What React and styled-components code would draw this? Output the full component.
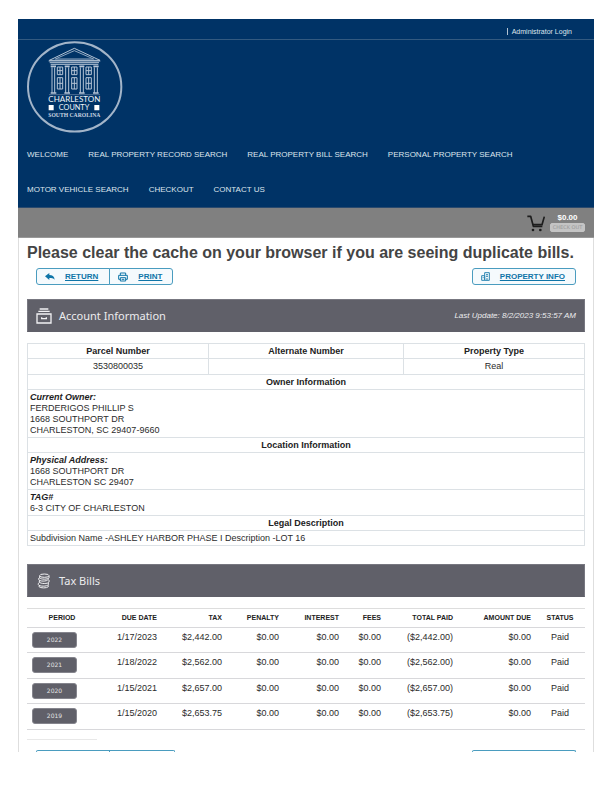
import React from "react";
import styled, { createGlobalStyle } from "styled-components";

const GlobalStyle = createGlobalStyle`
  * { box-sizing: border-box; }
  body {
    margin: 0;
    background: #fff;
    color: #2b2b2b;
    font: 9px/11px "Liberation Sans", Arial, sans-serif;
  }
`;

const Page = styled.div`
  padding: 19px 18px 40px;
`;

const Header = styled.header`
  background: #003366;
  color: #dde5ed;
  border-bottom: 1px solid #2a4a6e;
`;

const TopBar = styled.div`
  display: flex;
  justify-content: flex-end;
  align-items: center;
  gap: 4px;
  height: 21px;
  padding: 4px 22px 0 0;
  border-bottom: 1px solid #335a80;
  font-size: 7px;
`;

const Divider = styled.span`
  width: 1px;
  height: 7px;
  background: #b3c2d1;
`;

const PlainLink = styled.a`
  color: inherit;
  text-decoration: none;
`;

const LogoLink = styled.a`
  display: block;
  width: 96px;
  margin: 1px 0 0 9px;
  svg { display: block; }
`;

const Nav = styled.nav`
  display: flex;
  flex-wrap: wrap;
  column-gap: 20px;
  padding: 4px 60px 0 9px;
`;

const NavLink = styled(PlainLink)`
  font-size: 8px;
  line-height: 35px;
`;

const CartBar = styled.div`
  display: flex;
  justify-content: flex-end;
  align-items: center;
  gap: 5px;
  height: 30px;
  padding-right: 9px;
  background: #808080;
  border-bottom: 1px solid #999;
  svg { display: block; }
`;

const CartInfo = styled.div`
  display: flex;
  flex-direction: column;
  align-items: center;
  color: #fff;
  font-size: 8px;
  line-height: 9px;
`;

const CheckoutButton = styled.button`
  width: 35px;
  height: 9px;
  margin-top: 1px;
  padding: 0;
  border: 1px solid #c4c4c4;
  border-radius: 2px;
  background: #c4c4c4;
  color: #999;
  font: 5px/7px "DejaVu Sans", sans-serif;
`;

const Content = styled.main`
  padding: 0 8px;
  border: solid #dedede;
  border-width: 0 1px;
`;

const Notice = styled.h1`
  margin: 0;
  padding-top: 5px;
  color: #444;
  font-size: 16px;
  line-height: 20px;
  white-space: nowrap;
`;

const Toolbar = styled.div`
  display: flex;
  justify-content: space-between;
  padding: 5px 9px 0;
`;

const ButtonGroup = styled.div`
  display: flex;
`;

const ToolButton = styled.button`
  display: flex;
  align-items: center;
  gap: 10px;
  height: 17px;
  padding: 0 10px 0 8px;
  border: 1px solid #4a9cbf;
  border-radius: 3px;
  background: #f5fafd;
  color: #0f75a8;
  font: bold 8px/10px "Liberation Sans", Arial, sans-serif;
  text-decoration: underline;
  & + & {
    margin-left: -1px;
    border-top-left-radius: 0;
    border-bottom-left-radius: 0;
  }
  &:first-child:not(:last-child) {
    padding-right: 11px;
    border-top-right-radius: 0;
    border-bottom-right-radius: 0;
  }
  svg { display: block; }
`;

const SectionBar = styled.div`
  display: flex;
  align-items: center;
  gap: 7px;
  height: 33px;
  margin-top: ${(p) => p.$top}px;
  padding: 0 8px;
  background: #606069;
  border: 1px solid #777780;
  border-bottom-color: #606069;
  color: #fff;
`;

const SectionTitle = styled.h2`
  flex: 1;
  margin: 0;
  color: #ececee;
  font: 11px/16px "Noto Sans", sans-serif;
`;

const Updated = styled.em`
  color: #ececee;
  font-size: 8px;
`;

const AccountTable = styled.table`
  width: 100%;
  margin-top: 11px;
  border-collapse: collapse;
  table-layout: fixed;
`;

const HeadCell = styled.th`
  width: ${(p) => (p.$wide ? "35%" : "auto")};
  padding: 2px;
  border: 1px solid #dce1e5;
  color: #222;
  line-height: 10px;
`;

const CenterCell = styled.td`
  padding: 2px;
  border: 1px solid #dce1e5;
  text-align: center;
`;

const InfoCell = styled.td`
  padding: 2px 2px 1px;
  border: 1px solid #dce1e5;
  p { margin: 0; }
  b { display: block; font-style: italic; color: #1d1d1d; }
`;

const BillsTable = styled.table`
  width: 100%;
  margin-top: 11px;
  border-collapse: collapse;
  table-layout: fixed;
  border-top: 1px solid #ddd;
  tr { border-bottom: 1px solid #d8d8db; }
`;

const BillHead = styled.th`
  padding: 4px ${(p) => (p.$center ? 0 : 4)}px;
  height: 19px;
  color: #222;
  font-size: 7px;
  line-height: 10px;
  white-space: nowrap;
  text-align: ${(p) => (p.$center ? "center" : "right")};
`;

const BillRow = styled.tr`
  height: 26px;
  &:nth-child(odd) { height: 25px; }
`;

const BillCell = styled.td`
  padding: 4px ${(p) => (p.$center ? 0 : 4)}px;
  vertical-align: top;
  text-align: ${(p) => (p.$center ? "center" : "right")};
`;

const PeriodButton = styled.button`
  display: block;
  width: 45px;
  height: 16px;
  margin: 0 0 0 5px;
  padding: 0;
  border: 1px solid #85858d;
  border-radius: 3px;
  background: #606069;
  color: #e4e4e6;
  font: 6px/12px "DejaVu Sans", sans-serif;
`;

const ShortRule = styled.hr`
  width: 70px;
  margin: 9px 0 0;
  border: 0;
  border-top: 1px solid #e8e8e8;
`;

const ClosingEdges = styled.div`
  display: flex;
  justify-content: space-between;
  margin-top: 10px;
  padding: 0 9px;
`;

const Edge = styled.span`
  width: ${(p) => p.$width}px;
  height: 2px;
  border: 1px solid #4a9cbf;
  border-bottom: 0;
  border-radius: ${(p) => p.$corners};
`;

const JoinedEdge = styled(Edge)`
  margin-left: -1px;
`;

function Logo() {
  return (
    <svg width="96" height="92" viewBox="27 77 288 276" fill="none" stroke="#b5c4d5">
      <ellipse cx="170" cy="214.5" rx="140" ry="134" stroke="#a3b5c9" strokeWidth="6" />
      <path d="M94 135 169 99 246 135Z" strokeWidth="3" />
      <path d="M112 131 169 106 227 131Z" stroke="#8fa6bf" strokeWidth="3" />
      <path d="M92 137H247M95 142H243M98 147H241" strokeWidth="3" />
      <path d="M98 153h16M140 153h15M184 153h15M226 153h16" strokeWidth="5" />
      <path d="M102 156v77M110 156v77M143 156v77M152 156v77M187 156v77M196 156v77M229 156v77M238 156v77" strokeWidth="3" />
      <path d="M98 233h17M139 233h17M183 233h17M225 233h17" strokeWidth="4" />
      {[118, 161, 204].map((x) => (
        <g key={x} strokeWidth="3">
          <path d={`M${x} 155h16v23h-16zM${x + 8} 155v23M${x} 166h16`} />
          <path d={`M${x} 187h16v34h-16zM${x + 8} 187v34M${x} 204h16`} />
        </g>
      ))}
      <path d="M93 238H246" stroke="#7890ad" strokeWidth="2" />
      <g fill="#f0f4f8" stroke="none" textAnchor="middle">
        <text x="169" y="260" fontFamily="Lato, sans-serif" fontSize="24">CHARLESTON</text>
        <text x="168" y="284" fontFamily="Lato, sans-serif" fontSize="22">COUNTY</text>
        <text x="169" y="304" fontFamily="Liberation Serif, serif" fontWeight="bold" fontSize="17" fill="#cbd6e2">SOUTH CAROLINA</text>
        <path fill="#fff" d="M92 269h15v16H92zM229 269h15v16h-15z" />
      </g>
    </svg>
  );
}

function CartIcon() {
  return (
    <svg width="18" height="18" viewBox="0 0 54 54" fill="none" stroke="#1d1d1d" strokeWidth="5" strokeLinejoin="round">
      <path d="M1 7h10l8 30h27" />
      <path d="M18 32h27l7-24" />
      <circle cx="18" cy="48" r="4" fill="#1d1d1d" stroke="none" />
      <circle cx="40" cy="48" r="4" fill="#1d1d1d" stroke="none" />
    </svg>
  );
}

function ReturnIcon() {
  return (
    <svg width="10" height="9" viewBox="0 0 30 27" fill="#0f75a8">
      <path d="M0 13 13 3v6c9 0 15 4 16 14-4-4-9-5-16-5v6z" />
    </svg>
  );
}

function PrintIcon() {
  return (
    <svg width="10" height="10" viewBox="0 0 30 30" fill="none" stroke="#0f75a8" strokeWidth="3">
      <path d="M7 10V3h16v7M7 22H2V10h26v12h-5M7 17h16v10H7zM11 22h8" />
    </svg>
  );
}

function BuildingIcon() {
  return (
    <svg width="9" height="9" viewBox="0 0 27 27" fill="none" stroke="#2c86b3" strokeWidth="3">
      <path d="M2 11h9v14H2zM11 2h14v23H11zM18 25v-7M5 17h3M15 8h6M15 13h6" />
    </svg>
  );
}

function ArchiveIcon() {
  return (
    <svg width="16" height="16" viewBox="0 0 48 48" fill="none" stroke="#f1f1f3" strokeWidth="4">
      <path d="M11 3h26M7 10h34M3 18h42v27H3zM17 28v4h14v-4" />
    </svg>
  );
}

function CoinsIcon() {
  return (
    <svg width="16" height="16" viewBox="0 0 48 48" fill="none" stroke="#f1f1f3" strokeWidth="3">
      <ellipse cx="25" cy="8" rx="14" ry="5" />
      <path d="M11 9v5c2 6 26 6 28 0V9M8 19c0 7 26 7 29 0v-3M8 19v-3l4-2M10 23v4c3 6 27 6 29 0v-6M7 31v4c3 6 26 6 30 0v-5M7 31l4-3M9 38v3c4 5 24 5 28 0v-4" />
    </svg>
  );
}

const navItems = [
  "WELCOME",
  "REAL PROPERTY RECORD SEARCH",
  "REAL PROPERTY BILL SEARCH",
  "PERSONAL PROPERTY SEARCH",
  "MOTOR VEHICLE SEARCH",
  "CHECKOUT",
  "CONTACT US",
];

const columns = [
  ["PERIOD", 70, true],
  ["DUE DATE", 64],
  ["TAX", 65],
  ["PENALTY", 57],
  ["INTEREST", 60],
  ["FEES", 42],
  ["TOTAL PAID", 72],
  ["AMOUNT DUE", 78],
  ["STATUS", 50, true],
];

const bills = [
  ["2022", "1/17/2023", "$2,442.00"],
  ["2021", "1/18/2022", "$2,562.00"],
  ["2020", "1/15/2021", "$2,657.00"],
  ["2019", "1/15/2020", "$2,653.75"],
];

export default function App() {
  return (
    <Page>
      <GlobalStyle />
      <Header>
        <TopBar>
          <Divider />
          <PlainLink href="#login">Administrator Login</PlainLink>
        </TopBar>
        <LogoLink href="#home" aria-label="Charleston County South Carolina"><Logo /></LogoLink>
        <Nav>
          {navItems.map((item) => <NavLink key={item} href="#nav">{item}</NavLink>)}
        </Nav>
      </Header>
      <CartBar>
        <CartIcon />
        <CartInfo>
          <b>$0.00</b>
          <CheckoutButton>CHECK OUT</CheckoutButton>
        </CartInfo>
      </CartBar>
      <Content>
        <Notice>Please clear the cache on your browser if you are seeing duplicate bills.</Notice>
        <Toolbar>
          <ButtonGroup>
            <ToolButton><ReturnIcon />RETURN</ToolButton>
            <ToolButton><PrintIcon />PRINT</ToolButton>
          </ButtonGroup>
          <ToolButton><BuildingIcon />PROPERTY INFO</ToolButton>
        </Toolbar>
        <SectionBar $top={14}>
          <ArchiveIcon />
          <SectionTitle>Account Information</SectionTitle>
          <Updated>Last Update: 8/2/2023 9:53:57 AM</Updated>
        </SectionBar>
        <AccountTable>
          <tbody>
            <tr>
              <HeadCell>Parcel Number</HeadCell>
              <HeadCell $wide>Alternate Number</HeadCell>
              <HeadCell>Property Type</HeadCell>
            </tr>
            <tr><CenterCell>3530800035</CenterCell><CenterCell /><CenterCell>Real</CenterCell></tr>
            <tr><HeadCell colSpan={3}>Owner Information</HeadCell></tr>
            <tr>
              <InfoCell colSpan={3}>
                <b>Current Owner:</b>
                <p>FERDERIGOS PHILLIP S<br />1668 SOUTHPORT DR<br />CHARLESTON, SC 29407-9660</p>
              </InfoCell>
            </tr>
            <tr><HeadCell colSpan={3}>Location Information</HeadCell></tr>
            <tr>
              <InfoCell colSpan={3}>
                <b>Physical Address:</b>
                <p>1668 SOUTHPORT DR<br />CHARLESTON SC 29407</p>
              </InfoCell>
            </tr>
            <tr>
              <InfoCell colSpan={3}>
                <b>TAG#</b>
                <p>6-3 CITY OF CHARLESTON</p>
              </InfoCell>
            </tr>
            <tr><HeadCell colSpan={3}>Legal Description</HeadCell></tr>
            <tr><InfoCell colSpan={3}>Subdivision Name -ASHLEY HARBOR PHASE I Description -LOT 16</InfoCell></tr>
          </tbody>
        </AccountTable>
        <SectionBar $top={18}>
          <CoinsIcon />
          <SectionTitle>Tax Bills</SectionTitle>
        </SectionBar>
        <BillsTable>
          <colgroup>
            {columns.map(([name, width]) => <col key={name} style={{ width: `${(width / 558) * 100}%` }} />)}
          </colgroup>
          <thead>
            <tr>{columns.map(([name, , center]) => <BillHead key={name} $center={center}>{name}</BillHead>)}</tr>
          </thead>
          <tbody>
            {bills.map(([year, due, amount]) => (
              <BillRow key={year}>
                <BillCell $center><PeriodButton>{year}</PeriodButton></BillCell>
                <BillCell>{due}</BillCell>
                <BillCell>{amount}</BillCell>
                <BillCell>$0.00</BillCell>
                <BillCell>$0.00</BillCell>
                <BillCell>$0.00</BillCell>
                <BillCell>({amount})</BillCell>
                <BillCell>$0.00</BillCell>
                <BillCell $center>Paid</BillCell>
              </BillRow>
            ))}
          </tbody>
        </BillsTable>
        <ShortRule />
        <ClosingEdges>
          <ButtonGroup>
            <Edge $width={74} $corners="3px 0 0 0" />
            <JoinedEdge $width={66} $corners="0 3px 0 0" />
          </ButtonGroup>
          <Edge $width={104} $corners="3px 3px 0 0" />
        </ClosingEdges>
      </Content>
    </Page>
  );
}
